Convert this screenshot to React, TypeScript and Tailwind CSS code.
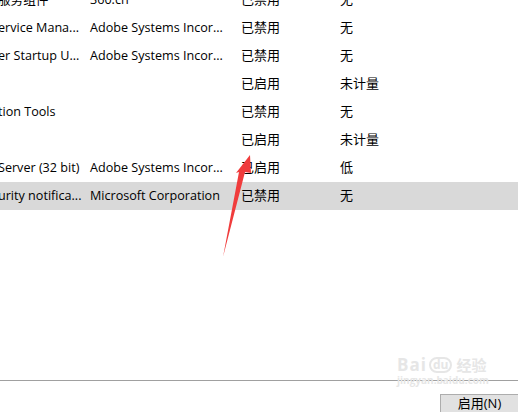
const rows = [
  { name: "服务组件", pub: "360.cn", status: "已禁用", impact: "无" },
  { name: "ervice Mana...", pub: "Adobe Systems Incor...", status: "已禁用", impact: "无" },
  { name: "er Startup U...", pub: "Adobe Systems Incor...", status: "已禁用", impact: "无" },
  { name: "", pub: "", status: "已启用", impact: "未计量" },
  { name: "tion Tools", pub: "", status: "已禁用", impact: "无" },
  { name: "", pub: "", status: "已启用", impact: "未计量" },
  { name: "Server (32 bit)", pub: "Adobe Systems Incor...", status: "已启用", impact: "低" },
  { name: "urity notifica...", pub: "Microsoft Corporation", status: "已禁用", impact: "无", selected: true },
];

export default function App() {
  return (
    <div
      className="relative w-[518px] h-[412px] overflow-hidden bg-white text-black text-[12.6px]"
      style={{ fontFamily: '"Open Sans", "Noto Sans CJK SC", sans-serif' }}
    >
      <div className="h-[380px] overflow-hidden">
        <div className="mt-[-14px]">
          {rows.map((r, i) => (
            <div
              key={i}
              className={`flex items-center h-[28px] whitespace-nowrap ${r.selected ? "bg-[#d9d9d9]" : ""}`}
            >
              <div className="w-[90px] overflow-hidden">
                <div className="ml-[-2px]">{r.name}</div>
              </div>
              <div className="w-[151px]">{r.pub}</div>
              <div className="w-[99px] text-[13px]">{r.status}</div>
              <div className="text-[13px]">{r.impact}</div>
            </div>
          ))}
        </div>
      </div>

      <div className="border-t border-[#a0a0a0] h-[32px] flex justify-end items-end">
        <button className="w-[78px] h-[18px] bg-[#e1e1e1] border border-[#adadad] border-r-0 border-b-0 text-[13px] leading-none flex items-center justify-center pb-[1px]">
          启用(N)
        </button>
      </div>

      {/* baidu watermark */}
      <div className="absolute left-[397px] top-[356px] text-[#e6e6e6] leading-none pointer-events-none">
        <div className="flex items-end gap-[2px]">
          <span className="text-[17px] font-bold tracking-[1px]">Bai</span>
          <span className="text-[12px] font-bold border-2 border-[#e6e6e6] rounded-full px-[2px]">du</span>
          <span className="text-[15px] font-bold ml-[2px]">经验</span>
        </div>
        <div className="text-[10px] mt-[2px] font-bold">jingyan.baidu.com</div>
      </div>

      {/* red arrow */}
      <svg className="absolute left-0 top-0 pointer-events-none" width="518" height="412">
        <path d="M250 155 L251 173 L245 172 L223 257 L239 172 L236 173 Z" fill="#f03c3c" />
      </svg>
    </div>
  );
}
